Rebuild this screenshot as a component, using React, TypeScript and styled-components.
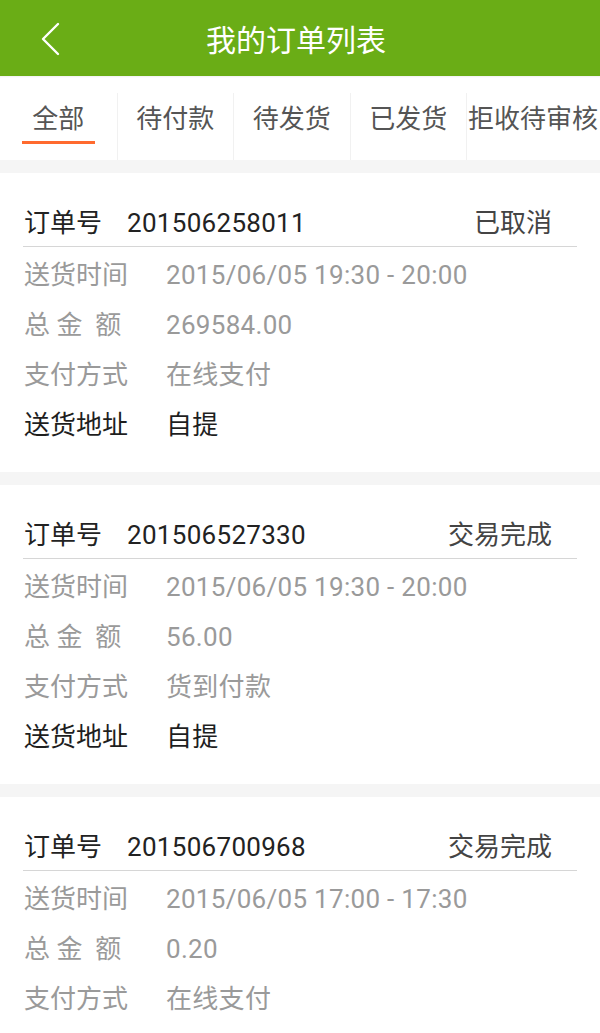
import React from 'react'
import styled, { createGlobalStyle } from 'styled-components'

const GlobalStyle = createGlobalStyle`
  html, body {
    margin: 0;
    padding: 0;
    background: #f5f5f5;
    font-family: Roboto, "Noto Sans CJK SC", sans-serif;
  }
`

const Page = styled.div`
  width: 600px;
  background: #f5f5f5;
`

const TopBar = styled.div`
  height: 76px;
  background: #6aad16;
  display: flex;
  align-items: center;
  justify-content: center;
  position: relative;
`

const BackButton = styled.button`
  position: absolute;
  left: 34px;
  top: 18px;
  width: 32px;
  height: 42px;
  border: none;
  background: transparent;
  padding: 0;
  display: flex;
  align-items: center;
  justify-content: center;
`

const Title = styled.h1`
  margin: 0 0 0 -8px;
  font-size: 30px;
  font-weight: 400;
  color: #fff;
`

const TabBar = styled.div`
  height: 84px;
  background: #fff;
  display: flex;
  align-items: flex-start;
  overflow: hidden;
  box-shadow: inset 0 2px 2px -1px rgba(0, 0, 0, 0.06);
`

const Tab = styled.div<{ $active?: boolean; $last?: boolean }>`
  flex: 0 0 auto;
  min-width: 116.5px;
  box-sizing: border-box;
  height: 67px;
  margin-top: 17px;
  padding: ${p => (p.$last ? '0 0 0 1px' : '0')};
  display: flex;
  flex-direction: column;
  align-items: ${p => (p.$last ? 'flex-start' : 'center')};
  border-left: ${p => (p.$active ? 'none' : '1px solid #f1f1f1')};
  position: relative;
`

const TabText = styled.span`
  margin-top: 8px;
  font-size: 26px;
  line-height: 36px;
  color: #555;
  white-space: nowrap;
`

const Underline = styled.div`
  position: absolute;
  left: 22px;
  top: 48px;
  width: 73px;
  height: 2.5px;
  background: #ff6a2e;
`

const List = styled.div`
  display: flex;
  flex-direction: column;
  gap: 13px;
  padding-top: 13px;
`

const Card = styled.div`
  background: #fff;
  padding: 24px 23px 25px 23px;
`

const OrderHead = styled.div`
  height: 50px;
  line-height: 50px;
  display: flex;
  align-items: baseline;
  padding: 1px 25px 0 1px;
  border-bottom: 1.5px solid #d6d6d6;
  box-sizing: border-box;
  font-size: 26px;
  color: #222;
`

const OrderLabel = styled.span`
  width: 103px;
`

const OrderNo = styled.span`
  flex: 1;
  letter-spacing: 0.3px;
`

const Status = styled.span`
  color: #444;
`

const Row = styled.div<{ $dark?: boolean }>`
  height: 50px;
  box-sizing: border-box;
  padding: 3px 0 0 1px;
  line-height: 50px;
  display: flex;
  align-items: baseline;
  font-size: 26px;
  color: ${p => (p.$dark ? '#1e1e1e' : '#9a9a9a')};
`

const Label = styled.span`
  width: 142px;
  white-space: pre;
`

const Value = styled.span`
  letter-spacing: 0.3px;
`

interface Order {
  no: string
  status: string
  time: string
  total: string
  pay: string
  address: string
}

const orders: Order[] = [
  { no: '201506258011', status: '已取消', time: '2015/06/05 19:30 - 20:00', total: '269584.00', pay: '在线支付', address: '自提' },
  { no: '201506527330', status: '交易完成', time: '2015/06/05 19:30 - 20:00', total: '56.00', pay: '货到付款', address: '自提' },
  { no: '201506700968', status: '交易完成', time: '2015/06/05 17:00 - 17:30', total: '0.20', pay: '在线支付', address: '自提' }
]

const tabs = ['全部', '待付款', '待发货', '已发货', '拒收待审核']

const OrderCard: React.FC<{ order: Order }> = ({ order }) => (
  <Card>
    <OrderHead>
      <OrderLabel>订单号</OrderLabel>
      <OrderNo>{order.no}</OrderNo>
      <Status>{order.status}</Status>
    </OrderHead>
    <Row>
      <Label>送货时间</Label>
      <Value>{order.time}</Value>
    </Row>
    <Row>
      <Label>{'总 金  额'}</Label>
      <Value>{order.total}</Value>
    </Row>
    <Row>
      <Label>支付方式</Label>
      <Value>{order.pay}</Value>
    </Row>
    <Row $dark>
      <Label>送货地址</Label>
      <Value>{order.address}</Value>
    </Row>
  </Card>
)

const App: React.FC = () => (
  <Page>
    <GlobalStyle />
    <TopBar>
      <BackButton aria-label="返回">
        <svg width="22" height="34" viewBox="0 0 22 34">
          <path d="M19 2 L4 17 L19 32" fill="none" stroke="#fff" strokeWidth="2.4" strokeLinecap="round" strokeLinejoin="round" />
        </svg>
      </BackButton>
      <Title>我的订单列表</Title>
    </TopBar>
    <TabBar>
      {tabs.map((t, i) => (
        <Tab key={t} $active={i === 0} $last={i === tabs.length - 1}>
          <TabText>{t}</TabText>
          {i === 0 && <Underline />}
        </Tab>
      ))}
    </TabBar>
    <List>
      {orders.map(o => (
        <OrderCard key={o.no} order={o} />
      ))}
    </List>
  </Page>
)

export default App
